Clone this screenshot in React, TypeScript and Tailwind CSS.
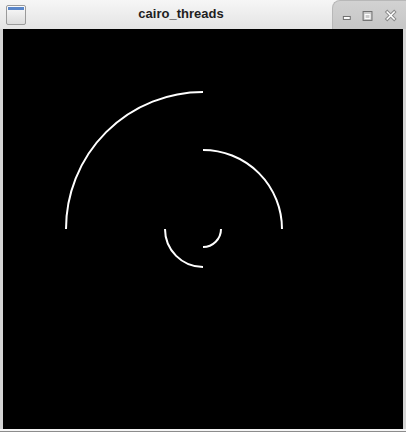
export default function App() {
  return (
    <div className="w-[406px] h-[432px] bg-[#ececec] flex flex-col" style={{ fontFamily: '"Liberation Sans", Arial, sans-serif' }}>
      {/* Title bar */}
      <div className="h-[29px] flex items-stretch bg-gradient-to-b from-[#f6f6f6] to-[#e4e4e4]">
        <div className="w-[30px] flex items-center justify-center pl-[1px]">
          <div className="w-[20px] h-[20px] border border-[#9a9a9a] rounded-[2px] bg-gradient-to-b from-[#fbfbfb] to-[#dcdcdc] flex flex-col">
            <div className="h-[3px] mx-[1px] mt-[1px] bg-[#5a86c9]" />
          </div>
        </div>
        <div className="flex-1 flex items-center justify-center text-[13px] font-bold text-[#1e1e1e] pb-[1px]">
          cairo_threads
        </div>
        <div className="w-[74px] rounded-tl-[8px] border-l border-t border-[#b8b8b8] bg-gradient-to-b from-[#d2d2d2] to-[#c6c6c6] flex items-center">
          <svg width="74" height="28" viewBox="0 0 74 28">
            {/* minimize */}
            <rect x="10.5" y="15.5" width="7" height="3" fill="#ffffff" stroke="#6e6e6e" />
            {/* maximize */}
            <rect x="30.5" y="10.5" width="9" height="9" fill="none" stroke="#6e6e6e" />
            <rect x="32.5" y="13.5" width="5" height="4" fill="none" stroke="#ffffff" />
            {/* close */}
            <path d="M55 11 L62 18 M62 11 L55 18" stroke="#8a8a8a" strokeWidth="3.5" strokeLinecap="square" />
            <path d="M55 11 L62 18 M62 11 L55 18" stroke="#ffffff" strokeWidth="1.6" strokeLinecap="square" />
          </svg>
        </div>
      </div>

      {/* Canvas */}
      <div className="flex-1 flex px-[3px] bg-[#d4d4d4]">
        <div className="w-[400px] h-[400px] bg-black">
          <svg width="400" height="400" viewBox="0 0 400 400">
            <g fill="none" stroke="#ffffff" strokeWidth="2">
              <path d="M 63 200 A 137 137 0 0 1 200 63" />
              <path d="M 200 121 A 79 79 0 0 1 279 200" />
              <path d="M 162 200 A 38 38 0 0 0 200 238" />
              <path d="M 218 200 A 18 18 0 0 1 200 218" />
            </g>
          </svg>
        </div>
      </div>
      <div className="h-[3px] bg-[#f4f4f4] border-b border-[#8c8c8c]" />
    </div>
  );
}
